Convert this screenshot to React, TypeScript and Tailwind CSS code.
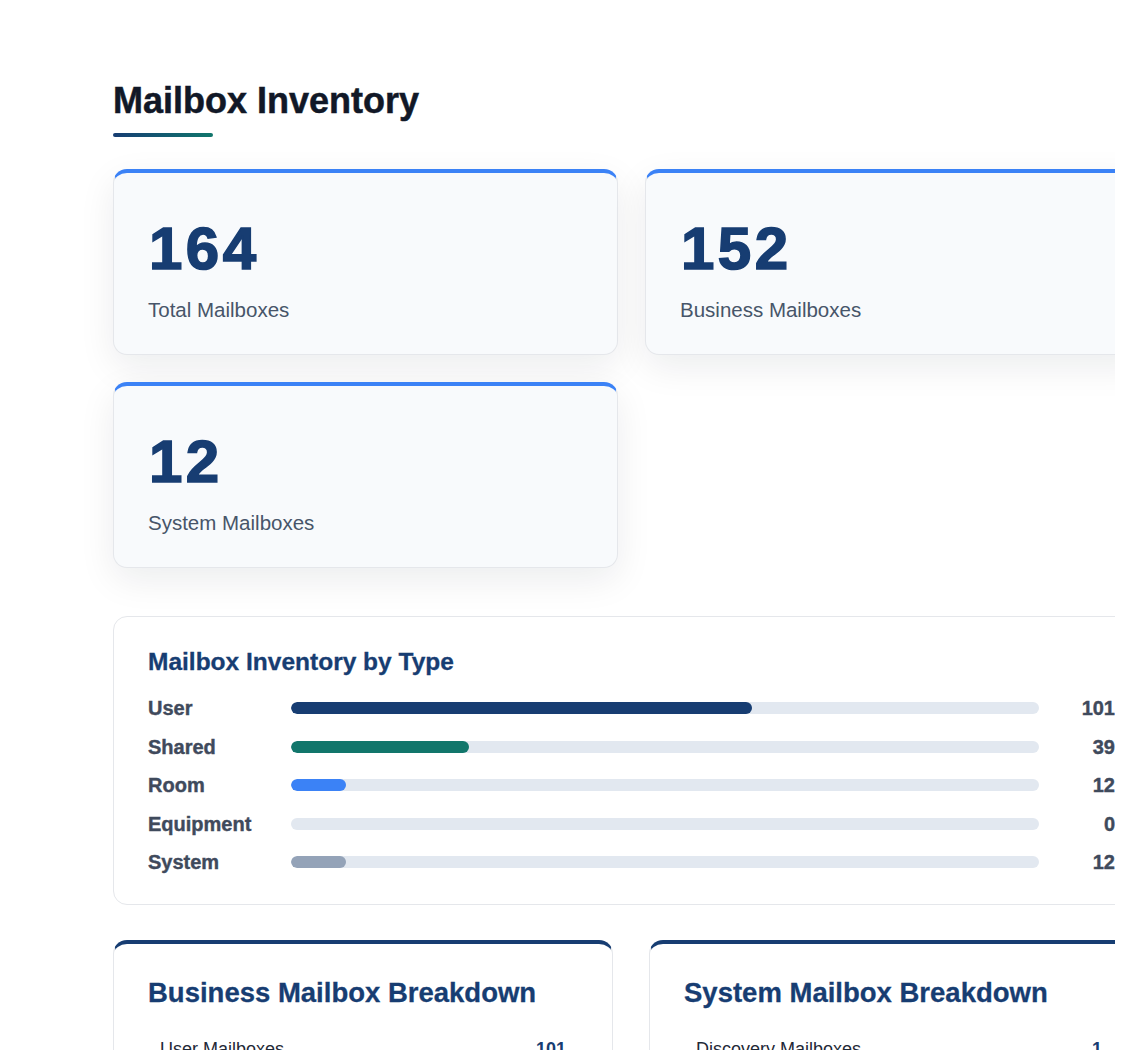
import React from 'react';

const stats = [
  { value: '164', label: 'Total Mailboxes' },
  { value: '152', label: 'Business Mailboxes' },
  { value: '12', label: 'System Mailboxes' },
];

const types = [
  { label: 'User', count: 101, color: 'bg-[#173d72]' },
  { label: 'Shared', count: 39, color: 'bg-[#11766b]' },
  { label: 'Room', count: 12, color: 'bg-[#3b82f6]' },
  { label: 'Equipment', count: 0, color: 'bg-[#94a3b8]' },
  { label: 'System', count: 12, color: 'bg-[#94a3b8]' },
];

const total = 164;

const breakdowns = [
  {
    title: 'Business Mailbox Breakdown',
    rows: [
      { label: 'User Mailboxes', value: '101' },
      { label: 'Shared Mailboxes', value: '39' },
    ],
  },
  {
    title: 'System Mailbox Breakdown',
    rows: [
      { label: 'Discovery Mailboxes', value: '1' },
      { label: 'Arbitration Mailboxes', value: '11' },
    ],
  },
];

function StatCard({ value, label }: { value: string; label: string }) {
  return (
    <div className="rounded-[14px] border border-[#e5e7eb] border-t-4 border-t-[#3b82f6] bg-[#f8fafc] px-[34px] pt-[46px] pb-[29px] shadow-[0_12px_36px_rgba(15,23,42,0.08)]">
      <div className="pl-[1px] text-[60px] font-bold leading-none tracking-[3.5px] text-[#173d72] [-webkit-text-stroke:1.6px_#173d72]">
        {value}
      </div>
      <div className="mt-[16px] text-[20.5px] leading-[30px] text-[#475569]">{label}</div>
    </div>
  );
}

export default function App() {
  return (
    <div className="h-[1050px] w-[1115px] overflow-hidden bg-white font-['Liberation_Sans',Arial,sans-serif]">
      <div className="ml-[113px] w-[1037px] pt-[79px]">
        <h1 className="text-[36px] font-bold leading-[43px] text-[#111827] [-webkit-text-stroke:0.5px_#111827]">
          Mailbox Inventory
        </h1>
        <div className="mt-[11px] h-[4px] w-[100px] rounded-full bg-gradient-to-r from-[#173d72] to-[#11766b]" />

        <div className="mt-[32px] grid grid-cols-[505px_505px] gap-[27px]">
          {stats.map((s) => (
            <StatCard key={s.label} value={s.value} label={s.label} />
          ))}
        </div>

        <div className="mt-[48px] rounded-[14px] border border-[#e5e7eb] bg-white px-[34px] pt-[30px] pb-[30px]">
          <h2 className="text-[24.5px] font-bold leading-[29px] text-[#173d72] [-webkit-text-stroke:0.3px_#173d72]">
            Mailbox Inventory by Type
          </h2>
          <div className="mt-[20px] flex flex-col gap-[14.5px]">
            {types.map((t) => (
              <div key={t.label} className="flex h-[24px] items-center">
                <div className="w-[143px] text-[20px] font-bold text-[#3f4a5c] [-webkit-text-stroke:0.4px_#3f4a5c]">
                  {t.label}
                </div>
                <div className="h-[12px] flex-1 overflow-hidden rounded-full bg-[#e2e8f0]">
                  <div className={`h-full rounded-full ${t.color}`} style={{ width: `${(t.count / total) * 100}%` }} />
                </div>
                <div className="w-[76px] text-right text-[20px] font-bold text-[#3f4a5c] [-webkit-text-stroke:0.4px_#3f4a5c]">
                  {t.count}
                </div>
              </div>
            ))}
          </div>
        </div>

        <div className="mt-[35px] grid grid-cols-[500px_500px] gap-[36px]">
          {breakdowns.map((b) => (
            <div
              key={b.title}
              className="rounded-[14px] border border-[#e5e7eb] border-t-4 border-t-[#173d72] bg-white px-[34px] pt-[32px] pb-[30px]"
            >
              <h3 className="text-[27.5px] font-bold leading-[34px] text-[#173d72] [-webkit-text-stroke:0.3px_#173d72]">
                {b.title}
              </h3>
              <div className="mt-[16px] flex flex-col">
                {b.rows.map((r) => (
                  <div
                    key={r.label}
                    className="flex items-center justify-between border-b border-[#f1f5f9] px-[12px] py-[10px]"
                  >
                    <span className="text-[18px] text-[#1f2937]">{r.label}</span>
                    <span className="text-[18px] font-bold text-[#173d72]">{r.value}</span>
                  </div>
                ))}
              </div>
            </div>
          ))}
        </div>
      </div>
    </div>
  );
}
